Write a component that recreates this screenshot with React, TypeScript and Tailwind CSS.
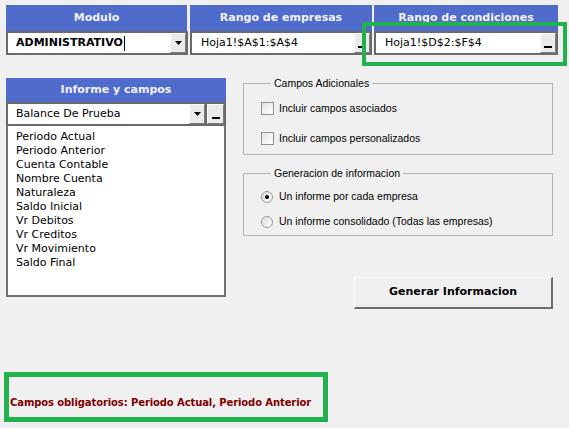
import React from "react";

const BLUE = "bg-[#4f6bcc]";

// boton elevado estilo Windows clasico
const RaisedButton: React.FC<{ kind: "down" | "dots"; className?: string }> = ({ kind, className }) => (
  <div
    className={`flex h-full items-end justify-center border border-t-white border-l-white border-r-[#7c7c7c] border-b-[#7c7c7c] bg-[#ebebeb] ${className ?? ""}`}
  >
    {kind === "down" ? (
      <svg width="7" height="4" viewBox="0 0 7 4" className="mb-[7px]">
        <polygon points="0,0 7,0 3.5,4" fill="#000" />
      </svg>
    ) : (
      <div className="mb-[4px] h-[2px] w-[8px] bg-black" />
    )}
  </div>
);

const Combo: React.FC<{
  text: string;
  bold?: boolean;
  cursor?: boolean;
  kind: "down" | "dots";
  className?: string;
  pad?: string;
}> = ({ text, bold, cursor, kind, className, pad }) => (
  <div className={`flex h-[24px] border-2 border-[#6a6a6a] bg-white ${className ?? ""}`}>
    <div className={`flex flex-1 items-center text-[11px] text-black ${pad ?? "pl-[8px]"} ${bold ? "font-bold" : ""}`}>
      {text}
      {cursor && <span className="ml-[1px] inline-block h-[15px] w-[1px] bg-black" />}
    </div>
    <RaisedButton kind={kind} className="w-[16px]" />
  </div>
);

const Header: React.FC<{ label: string; className?: string }> = ({ label, className }) => (
  <div className={`flex items-center justify-center ${BLUE} text-[11px] font-bold text-[#f2f2ff] ${className ?? ""}`}>
    {label}
  </div>
);

const campos = [
  "Periodo Actual",
  "Periodo Anterior",
  "Cuenta Contable",
  "Nombre Cuenta",
  "Naturaleza",
  "Saldo Inicial",
  "Vr Debitos",
  "Vr Creditos",
  "Vr Movimiento",
  "Saldo Final",
];

const CheckBox: React.FC<{ label: string }> = ({ label }) => (
  <div className="flex h-[13px] items-center">
    <div className="h-[13px] w-[13px] border border-[#8f8f8f] bg-gradient-to-br from-[#e4e4e4] to-white" />
    <span className="ml-[5px] text-[10.5px] text-black">{label}</span>
  </div>
);

const Radio: React.FC<{ label: string; checked?: boolean }> = ({ label, checked }) => (
  <div className="flex h-[13px] items-center">
    <div className="flex h-[12px] w-[12px] items-center justify-center rounded-full border border-[#9a9a9a] bg-gradient-to-br from-[#dcdcdc] to-white">
      {checked && <div className="h-[4px] w-[4px] rounded-full bg-black" />}
    </div>
    <span className="ml-[6px] text-[10.5px] text-black">{label}</span>
  </div>
);

export default function App() {
  return (
    <div className="relative h-[428px] w-[569px] overflow-hidden bg-[#f0f0f0] font-['DejaVu_Sans',sans-serif]">
      {/* fila superior */}
      <div className="flex gap-[2px] pl-[6px] pt-[5px]">
        <div className="flex w-[182px] flex-col">
          <Header label="Modulo" className="mr-[1px] h-[26px]" />
          <Combo text="ADMINISTRATIVO" bold cursor kind="down" />
        </div>
        <div className="flex w-[182px] flex-col">
          <Header label="Rango de empresas" className="h-[26px]" />
          <Combo text="Hoja1!$A$1:$A$4" kind="dots" pad="pl-[9px]" />
        </div>
        <div className="flex w-[184px] flex-col">
          <Header label="Rango de condiciones" className="h-[26px]" />
          <Combo text="Hoja1!$D$2:$F$4" kind="dots" pad="pl-[9px]" />
        </div>
      </div>

      {/* cuerpo */}
      <div className="mt-[23px] flex items-start pl-[6px]">
        <div className="flex w-[220px] flex-col">
          <Header label="Informe y campos" className="h-[24px]" />
          <div className="flex">
            <Combo text="Balance De Prueba" kind="down" className="w-[201px]" />
            <div className="h-[24px] w-[19px] border-2 border-l-0 border-[#6a6a6a]">
              <RaisedButton kind="dots" />
            </div>
          </div>
          <div className="h-[171px] border-2 border-t-0 border-[#707070] bg-white pl-[8px] pt-[4px] text-[11px] leading-[14px] text-black">
            {campos.map((c) => (
              <div key={c}>{c}</div>
            ))}
          </div>
        </div>

        <div className="ml-[17px] flex w-[310px] flex-col font-['Liberation_Sans',sans-serif]">
          <fieldset className="border border-[#b4b4b4] px-[17px] pb-[9px] pt-[14px]">
            <legend className="ml-[10px] px-[3px] text-[10.5px] leading-[10px] text-black">Campos Adicionales</legend>
            <div className="flex flex-col gap-[17px]">
              <CheckBox label="Incluir campos asociados" />
              <CheckBox label="Incluir campos personalizados" />
            </div>
          </fieldset>

          <fieldset className="mt-[13px] border border-[#b4b4b4] px-[17px] pb-[7px] pt-[12px]">
            <legend className="ml-[10px] px-[3px] text-[10.5px] leading-[10px] text-black">Generacion de informacion</legend>
            <div className="flex flex-col gap-[12px]">
              <Radio label="Un informe por cada empresa" checked />
              <Radio label="Un informe consolidado (Todas las empresas)" />
            </div>
          </fieldset>

          <button className="ml-[111px] mt-[41px] flex h-[32px] w-[199px] items-center justify-center border border-t-white border-l-white border-b-2 border-r-2 border-b-[#6d6d6d] border-r-[#6d6d6d] bg-[#efefef] font-['DejaVu_Sans',sans-serif] text-[11px] font-bold text-black">
            Generar Informacion
          </button>
        </div>
      </div>

      {/* campos obligatorios */}
      <div className="ml-[4px] mt-[63px] h-[50px] w-[324px] border-[5px] border-[#22b14c] pl-[1px] pt-[20px] text-[10px] font-bold leading-[12px] tracking-[-0.1px] text-[#800000]">
        Campos obligatorios: Periodo Actual, Periodo Anterior
      </div>

      {/* marca verde sobre rango de condiciones */}
      <div className="absolute left-[362px] top-[22px] h-[44px] w-[205px] border-4 border-[#22b14c]" />
    </div>
  );
}
